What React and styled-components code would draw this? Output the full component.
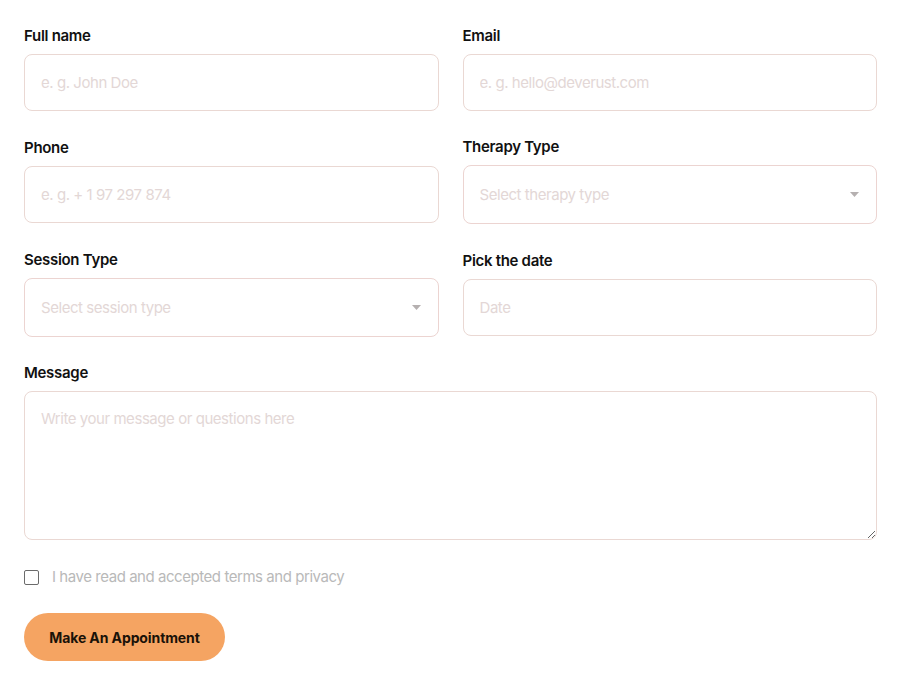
import React from 'react';
import styled, { createGlobalStyle } from 'styled-components';

const GlobalStyle = createGlobalStyle`
  html, body {
    margin: 0;
    padding: 0;
    background: #ffffff;
  }
  body {
    font-family: Inter, "Noto Sans", Arial, sans-serif;
    -webkit-font-smoothing: antialiased;
  }
`;

const Form = styled.form`
  width: 853px;
  padding: 26px 0 0 24px;
  display: flex;
  flex-direction: column;
`;

const Grid = styled.div`
  display: grid;
  grid-template-columns: 1fr 1fr;
  column-gap: 24px;
  row-gap: 26px;
  align-items: center;
`;

const Field = styled.div`
  display: flex;
  flex-direction: column;
  grid-column: ${(p) => (p.$wide ? '1 / -1' : 'auto')};
`;

const Label = styled.label`
  font-size: 15px;
  line-height: 20px;
  font-weight: 600;
  color: #111111;
  letter-spacing: -0.3px;
  margin-bottom: 8px;
`;

const controlBase = `
  box-sizing: border-box;
  width: 100%;
  border: 1px solid #ead8d3;
  border-radius: 8px;
  background: #ffffff;
  font-family: Inter, "Noto Sans", Arial, sans-serif;
  font-size: 15px;
  letter-spacing: -0.45px;
  color: #333;
  padding: 0 16px;
  outline: none;
  &::placeholder {
    color: #e3d7d6;
  }
`;

const Input = styled.input`
  ${controlBase}
  height: 57px;
`;

const SelectWrap = styled.div`
  position: relative;
`;

const Select = styled.select`
  ${controlBase}
  height: 59px;
  appearance: none;
  color: #e3d7d6;
  border-color: #ecd4d1;
`;

const Caret = styled.svg`
  position: absolute;
  right: 18px;
  top: 27px;
  pointer-events: none;
`;

const TextArea = styled.textarea`
  ${controlBase}
  height: 149px;
  padding: 17px 16px;
  resize: vertical;
  display: block;
`;

const CheckRow = styled.label`
  display: flex;
  align-items: center;
  gap: 13px;
  margin-top: 27px;
  font-size: 15px;
  line-height: 20px;
  letter-spacing: -0.45px;
  color: #b9b9b9;
`;

const Box = styled.span`
  box-sizing: border-box;
  width: 15px;
  height: 15px;
  border: 1.5px solid #6b6b6b;
  border-radius: 2px;
  flex-shrink: 0;
`;

const Button = styled.button`
  align-self: flex-start;
  margin-top: 26px;
  width: 201px;
  height: 48px;
  border: none;
  border-radius: 24px;
  background: #f5a462;
  color: #1a1208;
  font-family: Inter, "Noto Sans", Arial, sans-serif;
  font-size: 14px;
  font-weight: 700;
  letter-spacing: -0.1px;
  cursor: pointer;
`;

const Dropdown = ({ placeholder }) => (
  <SelectWrap>
    <Select defaultValue="">
      <option value="" disabled>{placeholder}</option>
    </Select>
    <Caret width="9" height="5" viewBox="0 0 9 5">
      <path d="M0 0 L9 0 L4.5 5 Z" fill="#b5b0b0" />
    </Caret>
  </SelectWrap>
);

export default function App() {
  return (
    <>
      <GlobalStyle />
      <Form onSubmit={(e) => e.preventDefault()}>
        <Grid>
          <Field>
            <Label>Full name</Label>
            <Input placeholder="e. g. John Doe" />
          </Field>
          <Field>
            <Label>Email</Label>
            <Input placeholder="e. g. hello@deverust.com" />
          </Field>
          <Field>
            <Label>Phone</Label>
            <Input placeholder="e. g. + 1 97 297 874" />
          </Field>
          <Field>
            <Label>Therapy Type</Label>
            <Dropdown placeholder="Select therapy type" />
          </Field>
          <Field>
            <Label>Session Type</Label>
            <Dropdown placeholder="Select session type" />
          </Field>
          <Field>
            <Label>Pick the date</Label>
            <Input placeholder="Date" />
          </Field>
          <Field $wide>
            <Label>Message</Label>
            <TextArea placeholder="Write your message or questions here" />
          </Field>
        </Grid>
        <CheckRow>
          <Box />
          I have read and accepted terms and privacy
        </CheckRow>
        <Button type="submit">Make An Appointment</Button>
      </Form>
    </>
  );
}
